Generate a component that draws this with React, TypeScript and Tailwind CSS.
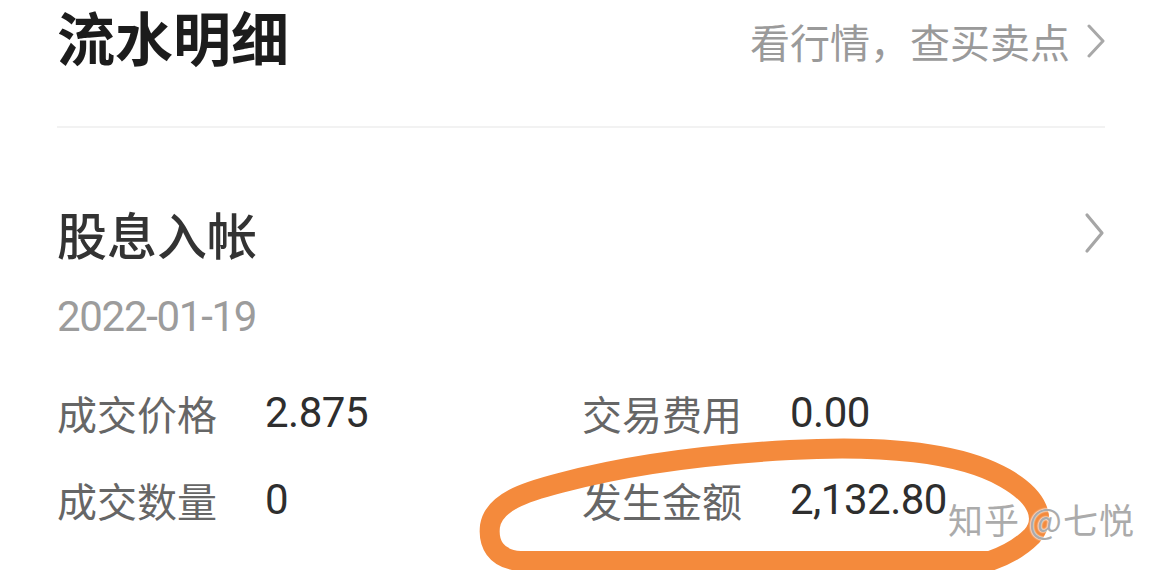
export default function App() {
  return (
    <div className="relative w-[1160px] h-[570px] overflow-hidden bg-white font-['Noto_Sans_CJK_SC',sans-serif]">
      <div className="pl-[57px] pr-[55px]">
        <div className="flex items-start justify-between h-[126px]">
          <div className="text-[58px] leading-[72px] font-bold text-[#1c1c1c]">流水明细</div>
          <div className="flex items-center mt-[21px] gap-[17px]">
            <span className="text-[40px] leading-[40px] text-[#9a9a9a]">看行情，查买卖点</span>
            <svg width="18" height="34" viewBox="0 0 18 34">
              <polyline points="2,2 16,17 2,32" fill="none" stroke="#a8a8a8" strokeWidth="3" strokeLinecap="round" strokeLinejoin="round" />
            </svg>
          </div>
        </div>
        <div className="h-[2px] bg-[#f2f2f2]" />

        <div className="flex items-center justify-between mt-[80px]">
          <div className="text-[50px] leading-[50px] font-medium text-[#333333]">股息入帐</div>
          <svg width="21" height="42" viewBox="0 0 21 42">
            <polyline points="3,3 18,21 3,39" fill="none" stroke="#a6a6a6" strokeWidth="3.2" strokeLinecap="round" strokeLinejoin="round" />
          </svg>
        </div>

        <div className="mt-[38px] text-[42px] leading-[42px] tracking-[-1.3px] text-[#9c9c9c] font-['Roboto',sans-serif]">
          2022-01-19
        </div>

        <div className="grid grid-cols-[525px_1fr] gap-y-[45px] mt-[54px]">
          {[
            ["成交价格", "2.875"],
            ["交易费用", "0.00"],
            ["成交数量", "0"],
            ["发生金额", "2,132.80"],
          ].map(([label, value]) => (
            <div key={label} className="flex items-center h-[42px]">
              <span className="w-[208px] text-[40px] leading-[40px] text-[#666666]">{label}</span>
              <span className="text-[42px] leading-[42px] tracking-[-0.5px] text-[#2e2e2e] font-['Roboto',sans-serif]">
                {value}
              </span>
            </div>
          ))}
        </div>
      </div>

      <svg
        className="absolute left-0 top-0 pointer-events-none"
        width="1160"
        height="570"
        viewBox="0 0 1160 570"
      >
        <path
          d="M 990 561 L 520 561 C 495 559, 488 543, 490 526 C 494 502, 525 492, 560 483 C 620 467, 700 455, 790 450 C 880 445, 960 452, 1005 478 C 1040 498, 1046 520, 1032 536 C 1020 548, 1005 556, 990 561"
          fill="none"
          stroke="#f48a3c"
          strokeWidth="20"
          strokeLinecap="round"
          strokeLinejoin="round"
        />
      </svg>

      <div className="absolute left-[948px] top-[501px] text-[35px] leading-[35px] tracking-[1px] text-[#ababab] [text-shadow:0_0_2px_#ffffff,0_0_2px_#ffffff] whitespace-nowrap">
        知乎 @七悦
      </div>
    </div>
  );
}
